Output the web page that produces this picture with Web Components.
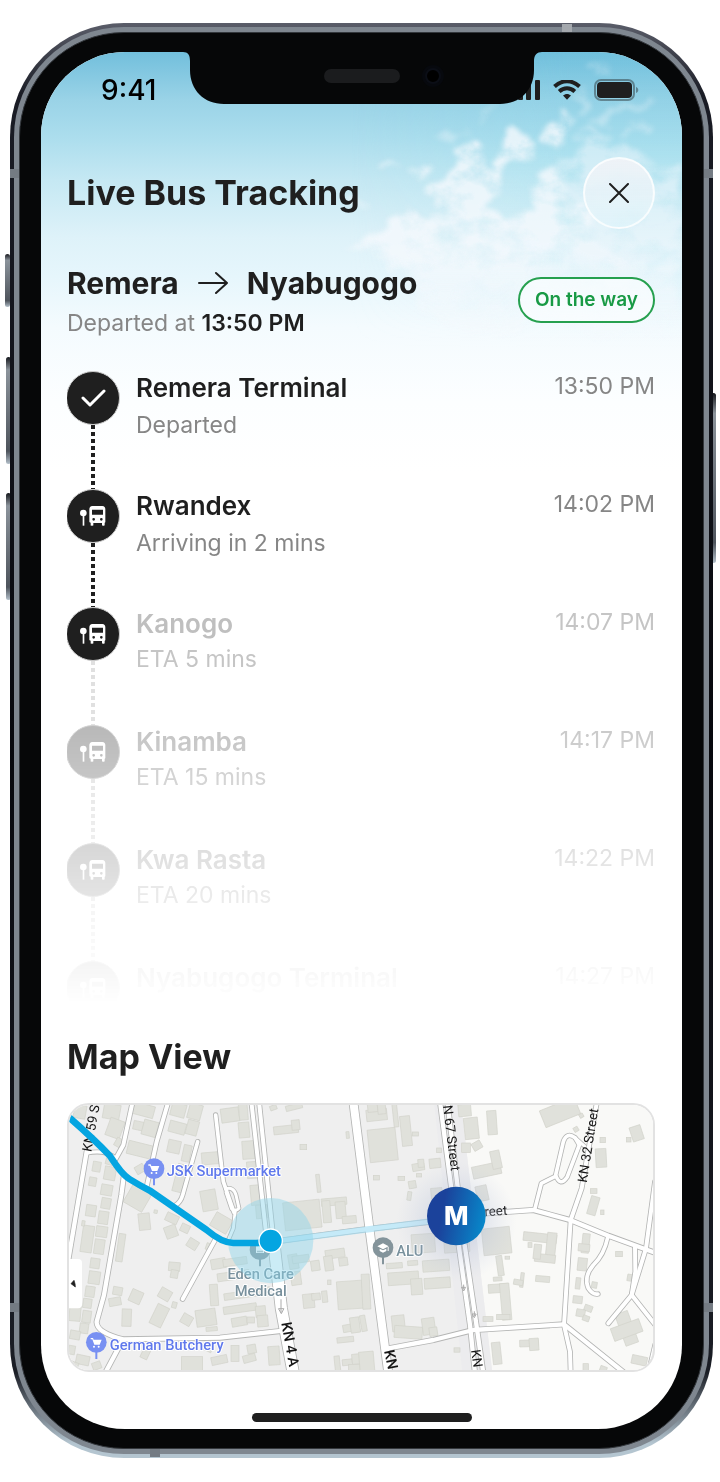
<!DOCTYPE html>
<html lang="en">
<head>
<meta charset="utf-8">
<meta name="viewport" content="width=device-width, initial-scale=1">
<title>Live Bus Tracking</title>
<style>
    body {
        margin: 0;
        padding: 23px 7px 23px 10px;
        background: #fff;
        color: #1f1f1f;
        font-family: Inter, "Liberation Sans", sans-serif;
    }
</style>
</head>
<body>
<phone-frame>
    <status-bar time="9:41"></status-bar>
    <page-header>Live Bus Tracking</page-header>
    <route-summary from="Remera" to="Nyabugogo" departed="13:50 PM">
        <status-pill slot="status">On the way</status-pill>
    </route-summary>
    <stop-timeline>
        <stop-item name="Remera Terminal" time="13:50 PM" icon="check" line="dark">Departed</stop-item>
        <stop-item name="Rwandex" time="14:02 PM" line="dark">Arriving in 2 mins</stop-item>
        <stop-item name="Kanogo" time="14:07 PM" upcoming next>ETA 5 mins</stop-item>
        <stop-item name="Kinamba" time="14:17 PM" upcoming>ETA 15 mins</stop-item>
        <stop-item name="Kwa Rasta" time="14:22 PM" upcoming>ETA 20 mins</stop-item>
        <stop-item name="Nyabugogo Terminal" time="14:27 PM" upcoming></stop-item>
    </stop-timeline>
    <map-section heading="Map View">
        <route-map></route-map>
    </map-section>
</phone-frame>

<script>
class BaseElement extends HTMLElement {
    connectedCallback () {
        if (this.shadowRoot) {
            return;
        }

        const template = document.createElement('template');
        template.innerHTML = this.template();

        this.attachShadow({ mode: 'open' });
        this.shadowRoot.appendChild(document.importNode(template.content, true));
    }

    attr (name) {
        return this.getAttribute(name) || '';
    }
}

class PhoneFrame extends BaseElement {
    template () {
        return `
        <style>
            :host {
                display: block;
                position: relative;
            }

            .edge {
                position: relative;
                padding: 4px;
                border-radius: 114px;
                background: linear-gradient(#5a5d69 0, #1a1c25 5%, #07080d 50%, #1a1d25 94%, #b4c5d0 99%);
            }

            .rail {
                padding: 5px;
                border-radius: 110px;
                background: #7f8790;
            }

            .bezel {
                padding: 19px 21px;
                border: 1px solid #33373c;
                border-radius: 105px;
                background: #060708;
            }

            .screen {
                position: relative;
                overflow: hidden;
                border-radius: 84px;
                background: #fff;
            }

            .content {
                position: relative;
            }

            sky-backdrop {
                position: absolute;
                inset: 0 0 auto 0;
            }

            .notch {
                position: absolute;
                top: 0;
                left: 50%;
                width: 344px;
                height: 52px;
                transform: translateX(-50%);
            }

            .notch svg {
                display: block;
                overflow: visible;
            }

            .key {
                position: absolute;
                width: 5px;
                border-radius: 3px;
                background: linear-gradient(#15171c, #8b939b 12%, #4e545c 88%, #b3bfc9);
            }

            .mute { left: -5px; top: 231px; height: 53px; }
            .volume-up { left: -4px; top: 334px; height: 107px; }
            .volume-down { left: -4px; top: 470px; height: 107px; }
            .power { right: -3px; top: 370px; height: 170px; }

            .seam {
                position: absolute;
                background: #747b83;
            }

            .s1 { left: 0; top: 146px; width: 9px; height: 9px; }
            .s2 { right: 0; top: 146px; width: 9px; height: 9px; }
            .s3 { left: 0; bottom: 146px; width: 9px; height: 9px; }
            .s4 { right: 0; bottom: 146px; width: 9px; height: 9px; }
            .s5 { right: 141px; top: 1px; width: 10px; height: 8px; background: #a4a8ad; }
            .s6 { left: 140px; bottom: 1px; width: 10px; height: 8px; }

            .home {
                width: 220px;
                height: 9px;
                margin: 41px auto 7px;
                border-radius: 5px;
                background: #1f1f1f;
            }
        </style>
        <span class="key mute"></span>
        <span class="key volume-up"></span>
        <span class="key volume-down"></span>
        <span class="key power"></span>
        <div class="edge">
            <div class="rail">
                <div class="bezel">
                    <div class="screen">
                        <sky-backdrop></sky-backdrop>
                        <div class="content">
                            <slot></slot>
                            <div class="home"></div>
                        </div>
                        <div class="notch">
                            <svg width="344" height="52" viewBox="0 0 344 52">
                                <path d="M-7 -1V0C-2 0 0 3 0 9v9c0 20 14 34 34 34h276c20 0 34-14 34-34V9c0-6 3-9 8-9v-1z" fill="#060708"/>
                                <rect x="134" y="17" width="76" height="14" rx="7" fill="#1b1c1e"/>
                                <circle cx="243" cy="24" r="11" fill="#07090e"/>
                                <circle cx="243" cy="24" r="7" fill="#000" stroke="#0b0e16" stroke-width="2"/>
                            </svg>
                        </div>
                    </div>
                </div>
            </div>
            <span class="seam s1"></span>
            <span class="seam s2"></span>
            <span class="seam s3"></span>
            <span class="seam s4"></span>
            <span class="seam s5"></span>
            <span class="seam s6"></span>
        </div>
        `;
    }
}

class SkyBackdrop extends BaseElement {
    template () {
        return `
        <style>
            :host {
                display: block;
                height: 420px;
                background: linear-gradient(#72bfdc 0, #9ad3e7 48px, #abdded 84px, #c5e8f3 128px, #def2f9 185px, #e6f6fc 225px, #f4fbfe 275px, #fcfeff 350px, #fff 420px);
            }

            svg {
                display: block;
                margin-left: auto;
            }
        </style>
        <svg width="370" height="370" viewBox="0 0 1110 1110">
            <defs>
                <filter id="cloud" x="-5%" y="-5%" width="110%" height="110%" color-interpolation-filters="sRGB">
                    <feTurbulence type="fractalNoise" baseFrequency=".011 .014" numOctaves="5" seed="4" result="noise"/>
                    <feDisplacementMap in="SourceGraphic" in2="noise" scale="100" xChannelSelector="R" yChannelSelector="G" result="shape"/>
                    <feGaussianBlur in="shape" stdDeviation="8" result="soft"/>
                    <feColorMatrix in="noise" type="matrix" values="0 0 0 0 1  0 0 0 0 1  0 0 0 0 1  0 0 2 0 -.2" result="holes"/>
                    <feComposite in="soft" in2="holes" operator="in"/>
                </filter>
                <linearGradient id="fade" x2="0" y2="1">
                    <stop offset="0" stop-color="#fff"/>
                    <stop offset=".55" stop-color="#fff"/>
                    <stop offset=".85" stop-color="#000"/>
                </linearGradient>
                <linearGradient id="tint" x2="0" y2="1">
                    <stop offset="0" stop-color="#6ac3df" stop-opacity=".2"/>
                    <stop offset=".3" stop-color="#a4e2ef" stop-opacity=".45"/>
                    <stop offset=".8" stop-color="#e6f7fc" stop-opacity="0"/>
                </linearGradient>
                <linearGradient id="side">
                    <stop offset=".1" stop-color="#000"/>
                    <stop offset=".7" stop-color="#fff"/>
                </linearGradient>
                <mask id="bottom"><rect width="1110" height="1110" fill="url(#fade)"/></mask>
                <mask id="left"><rect width="1110" height="1110" fill="url(#side)"/></mask>
            </defs>
            <rect width="1110" height="1110" fill="url(#tint)" mask="url(#left)"/>
            <g mask="url(#bottom)" fill="#f6f9fd">
                <g filter="url(#cloud)" opacity=".8">
                    <path d="M590 250l50-15 22 20-5 50-60 60-70 40 25-60 20-40z"/>
                    <path d="M700 260l25-50 45-25-8 40-35 60z"/>
                    <path d="M430 280l60-5 35 35 10 60 40 30-60 60-80 40-80-10 20-60-60-20 40-20 60-10z"/>
                    <path d="M670 350l60-5 30 40 20 60 60 10-20 90-80 60-90-20-50-50 20-60 50-30z"/>
                    <path d="M200 530l90-50 60 20 100-20 80-30 90 60 60 100-60 120 60 60-110 60-130-10-110-60-60-130-110-30-80-10z"/>
                    <path d="M730 310l120-50 60 20 80 30 120 30v300l-60-40-110 60-130-60-60-120z" opacity=".6"/>
                    <path d="M640 560l180 0 180 70 100 0v220l-240 10-220-80z" opacity=".7"/>
                    <ellipse cx="240" cy="344" rx="24" ry="9"/>
                    <ellipse cx="325" cy="358" rx="34" ry="12"/>
                    <ellipse cx="130" cy="468" rx="26" ry="10"/>
                    <g opacity=".45">
                        <ellipse cx="865" cy="50" rx="36" ry="14"/>
                        <path d="M790 170l16-80 20 0 2 60-14 24z"/>
                        <ellipse cx="980" cy="168" rx="56" ry="12" transform="rotate(-12 980 168)"/>
                        <ellipse cx="880" cy="190" rx="50" ry="12" transform="rotate(-20 880 190)"/>
                        <ellipse cx="985" cy="232" rx="60" ry="14" transform="rotate(-10 985 232)"/>
                        <ellipse cx="840" cy="246" rx="60" ry="16"/>
                        <ellipse cx="520" cy="180" rx="40" ry="10" transform="rotate(-40 520 180)"/>
                        <ellipse cx="430" cy="238" rx="44" ry="9" transform="rotate(-15 430 238)"/>
                    </g>
                </g>
            </g>
        </svg>
        `;
    }
}

class StatusBar extends BaseElement {
    template () {
        return `
        <style>
            :host {
                display: flex;
                align-items: center;
                justify-content: space-between;
                height: 76px;
                padding: 0 43px 0 60px;
                color: #000;
                font-size: 28px;
                font-weight: 500;
            }

            .icons {
                display: flex;
                align-items: center;
                gap: 13px;
            }

            svg {
                display: block;
            }
        </style>
        <span>${this.attr('time')}</span>
        <div class="icons">
            <svg width="30" height="20" viewBox="0 0 30 20" fill="#1f1f1f">
                <rect x="0" y="13" width="5" height="7" rx="1"/>
                <rect x="8" y="9" width="5" height="11" rx="1"/>
                <rect x="16" y="4" width="5" height="16" rx="1"/>
                <rect x="25" y="0" width="5" height="20" rx="1"/>
            </svg>
            <svg width="28" height="20" viewBox="0 0 28 20" fill="none" stroke="#1f1f1f">
                <path d="M1.500 6.500C9-.5 19-.5 26.500 6.500" stroke-width="4"/>
                <path d="M6.200 11.500c4.600-4.200 11-4.200 15.600 0" stroke-width="4"/>
                <path d="M10 15.600c2.400-2.200 5.600-2.200 8 0l-4 4.200z" fill="#1f1f1f" stroke="none"/>
            </svg>
            <svg width="45" height="22" viewBox="0 0 45 22">
                <rect x="1" y="1" width="39" height="20" rx="6" fill="none" stroke="#1f1f1f" stroke-opacity=".42" stroke-width="2"/>
                <rect x="3" y="3" width="35" height="16" rx="4" fill="#1f1f1f"/>
                <path d="M42 8c3 1 3 5 0 6z" fill="#1f1f1f" fill-opacity=".42"/>
            </svg>
        </div>
        `;
    }
}

class PageHeader extends BaseElement {
    template () {
        return `
        <style>
            :host {
                display: flex;
                align-items: center;
                justify-content: space-between;
                padding: 29px 27px 0 26px;
            }

            h1 {
                margin: 0;
                font-size: 34px;
                line-height: 40px;
                font-weight: 700;
            }

            button {
                display: grid;
                place-items: center;
                width: 72px;
                height: 72px;
                padding: 0;
                border: 2px solid rgba(255, 255, 255, .75);
                border-radius: 50%;
                background: linear-gradient(rgba(241, 243, 247, .9), rgba(223, 244, 250, .75));
                color: #1f1f1f;
                cursor: pointer;
            }
        </style>
        <h1><slot></slot></h1>
        <button type="button" aria-label="Close">
            <svg width="20" height="20" viewBox="0 0 20 20" fill="none" stroke="currentColor" stroke-width="2" stroke-linecap="round">
                <path d="M1 1l18 18M19 1L1 19"/>
            </svg>
        </button>
        `;
    }
}

class RouteSummary extends BaseElement {
    template () {
        return `
        <style>
            :host {
                display: flex;
                align-items: center;
                justify-content: space-between;
                padding: 34px 27px 0 26px;
            }

            h2 {
                display: flex;
                align-items: center;
                gap: 19px;
                margin: 0;
                font-size: 30px;
                line-height: 40px;
                font-weight: 700;
            }

            p {
                margin: 0;
                color: #868686;
                font-size: 23px;
                line-height: 40px;
            }

            b {
                color: #1f1f1f;
                font-weight: 600;
            }
        </style>
        <div>
            <h2>
                <span>${this.attr('from')}</span>
                <svg width="30" height="24" viewBox="0 0 30 24" fill="none" stroke="currentColor" stroke-width="2" stroke-linecap="round" stroke-linejoin="round" aria-hidden="true">
                    <path d="M1 12h28M18 2l11 10-11 10"/>
                </svg>
                <span>${this.attr('to')}</span>
            </h2>
            <p>Departed at <b>${this.attr('departed')}</b></p>
        </div>
        <slot name="status"></slot>
        `;
    }
}

class StatusPill extends BaseElement {
    template () {
        return `
        <style>
            :host {
                display: block;
                margin-bottom: 6px;
                padding: 0 15px;
                border: 2px solid #26a04f;
                border-radius: 24px;
                background: rgba(255, 255, 255, .5);
                color: #189a45;
                font-size: 19px;
                line-height: 42px;
                font-weight: 600;
                white-space: nowrap;
            }
        </style>
        <slot></slot>
        `;
    }
}

class StopTimeline extends BaseElement {
    template () {
        return `
        <style>
            :host {
                display: block;
                height: 632px;
                margin: 28px 27px 0 26px;
                overflow: hidden;
                -webkit-mask-image: linear-gradient(#000 330px, transparent);
                mask-image: linear-gradient(#000 330px, transparent);
            }
        </style>
        <slot></slot>
        `;
    }
}

const stopIcons = {
    check: `<svg width="25" height="18" viewBox="0 0 25 18" fill="none" stroke="#fff" stroke-width="3" stroke-linecap="round" stroke-linejoin="round">
                <path d="M2 9l7 7L23 2"/>
            </svg>`,
    bus: `<svg width="26" height="20" viewBox="0 0 78 60" fill="#fff">
                <circle cx="10" cy="21" r="10"/>
                <path d="M8 20h5v39H8z"/>
                <path fill-rule="evenodd" d="M37 0h30c6 0 9 4 9 10v38c0 1-1 2-2 2v8c0 2-8 2-8 0v-7H40v7c0 2-8 2-8 0v-8c-3 0-4-1-4-4V10c0-6 3-10 9-10zM36 11v15h33V11zM41 36a4 4 0 100 8 4 4 0 000-8zM64 36a4 4 0 100 8 4 4 0 000-8z"/>
            </svg>`,
};

class StopItem extends BaseElement {
    template () {
        return `
        <style>
            :host {
                display: grid;
                grid-template-columns: 52px 1fr auto;
                column-gap: 17px;
                height: 118px;
                --ink: #1f1f1f;
                --muted: #868686;
                --dot: #1f1f1f;
                --line: #e0e0e0;
            }

            :host([upcoming]) {
                --ink: #bfbfbf;
                --muted: #c5c5c5;
                --dot: #b2b2b2;
            }

            :host([next]) {
                --dot: #1f1f1f;
            }

            :host([line="dark"]) {
                --line: #1f1f1f;
            }

            .track {
                display: flex;
                flex-direction: column;
                align-items: center;
            }

            .dot {
                display: grid;
                place-items: center;
                box-sizing: border-box;
                width: 54px;
                height: 54px;
                border: 1px solid #ccc;
                border-radius: 50%;
                background: var(--dot);
            }

            .line {
                flex: 1;
                width: 4px;
                background: repeating-linear-gradient(var(--line) 0 4px, transparent 4px 7px);
            }

            .name {
                margin: 0;
                color: var(--ink);
                font-size: 26px;
                line-height: 34px;
                font-weight: 600;
                white-space: nowrap;
            }

            .note {
                margin: 5px 0 0;
                color: var(--muted);
                font-size: 23px;
                line-height: 30px;
            }

            :host([upcoming]) .note {
                margin-top: 3px;
            }

            time {
                color: var(--muted);
                font-size: 23px;
                line-height: 30px;
            }
        </style>
        <div class="track">
            <span class="dot">${stopIcons[this.attr('icon') || 'bus']}</span>
            <span class="line"></span>
        </div>
        <div>
            <h3 class="name">${this.attr('name')}</h3>
            <p class="note"><slot></slot></p>
        </div>
        <time>${this.attr('time')}</time>
        `;
    }
}

class MapSection extends BaseElement {
    template () {
        return `
        <style>
            :host {
                display: block;
                padding: 34px 27px 0 26px;
            }

            h2 {
                margin: 0 0 26px;
                font-size: 34px;
                line-height: 40px;
                font-weight: 700;
            }
        </style>
        <h2>${this.attr('heading')}</h2>
        <slot></slot>
        `;
    }
}

// centre x, centre y, width, height, angle
const buildings = [
    [60, 50, 36, 40, 10], [155, 50, 50, 45, 10], [165, 100, 45, 55, 20], [180, 145, 30, 26, 30],
    [250, 45, 66, 36, 15], [235, 92, 30, 26, 12], [270, 100, 44, 46, 15], [243, 165, 82, 40, 14],
    [355, 45, 44, 40, 15], [405, 50, 40, 46, 15], [352, 98, 50, 34, 15], [397, 98, 34, 44, 15],
    [342, 155, 38, 38, 12], [380, 175, 24, 50, 12], [362, 250, 34, 84, 14], [450, 190, 50, 36, -5],
    [510, 60, 54, 42, -8], [550, 50, 26, 50, -5], [552, 105, 32, 46, -5], [565, 165, 36, 54, -4],
    [578, 225, 34, 50, -4], [590, 300, 36, 60, -5], [605, 350, 34, 40, -5],
    [148, 200, 22, 18, 15], [110, 215, 24, 30, 10], [150, 235, 34, 40, 10], [98, 260, 22, 26, 10],
    [140, 285, 34, 32, 10], [138, 325, 28, 32, 10], [93, 347, 30, 34, 8], [130, 368, 30, 38, 8],
    [125, 410, 34, 32, 8], [82, 432, 34, 80, 8], [118, 455, 30, 44, 8], [70, 385, 9, 16, 8],
    [105, 505, 28, 30, 8], [103, 548, 34, 38, 8], [90, 590, 28, 32, 8], [82, 625, 26, 28, 8],
    [45, 655, 34, 46, 5], [80, 665, 26, 36, 8], [72, 700, 26, 30, 8], [45, 720, 30, 26, 10],
    [35, 765, 20, 26, 10], [68, 795, 40, 28, 12], [110, 812, 26, 22, -20], [42, 812, 24, 22, 20],
    [232, 310, 64, 60, 30], [240, 222, 28, 24, -30], [287, 350, 10, 10, 10], [253, 380, 34, 50, -6],
    [182, 458, 20, 84, 8], [336, 370, 38, 26, 25], [333, 410, 36, 36, -20], [375, 400, 26, 24, 25],
    [398, 447, 32, 28, 32], [446, 455, 16, 20, 20], [447, 316, 46, 62, -10], [484, 384, 56, 46, 30],
    [343, 515, 34, 26, 5], [343, 537, 22, 24, 10], [173, 588, 28, 24, 10], [165, 620, 36, 24, -10],
    [228, 605, 36, 38, 24], [200, 668, 28, 52, 2], [315, 598, 36, 32, 30], [343, 630, 14, 18, 15],
    [298, 662, 38, 64, 26], [380, 674, 32, 30, 30], [438, 668, 60, 50, -8], [455, 702, 34, 12, -5],
    [462, 600, 24, 64, -4], [475, 506, 44, 30, -10], [525, 500, 72, 22, -8], [520, 542, 96, 24, -8],
    [540, 600, 96, 20, -8], [540, 641, 100, 22, -8], [538, 680, 46, 26, -10], [572, 675, 22, 18, 0],
    [602, 650, 30, 34, -5], [608, 678, 32, 34, -5], [600, 590, 60, 22, -8],
    [396, 806, 64, 42, 0], [478, 795, 48, 24, -12], [525, 775, 24, 48, 0], [575, 762, 26, 26, -10],
    [568, 790, 38, 22, -15], [642, 782, 34, 56, -4], [258, 772, 22, 40, 25], [445, 760, 24, 18, 25],
    [678, 104, 74, 24, -6], [707, 90, 24, 30, -6], [702, 36, 50, 16, -14], [640, 38, 20, 14, -20], [730, 156, 20, 16, 0],
    [775, 265, 11, 54, -6], [727, 360, 110, 84, -6], [822, 320, 76, 22, -5], [800, 350, 24, 66, -5],
    [842, 345, 30, 50, -5], [868, 374, 42, 22, -5], [863, 120, 9, 20, -5],
    [700, 500, 28, 44, -10], [722, 492, 50, 22, -8], [766, 512, 26, 30, -8], [825, 476, 58, 26, -8],
    [806, 505, 26, 44, -8], [850, 500, 26, 24, -8], [708, 550, 30, 40, -8],
    [746, 618, 34, 42, -6], [768, 605, 26, 20, -6], [794, 605, 16, 34, -6], [808, 562, 10, 14, 0],
    [870, 600, 76, 84, -4], [862, 700, 26, 22, -10], [885, 690, 28, 46, -8], [856, 734, 50, 16, -6],
    [832, 806, 16, 46, -6], [862, 802, 30, 18, -6], [890, 792, 28, 30, -6], [886, 818, 40, 20, 0],
    [918, 590, 24, 105, -3], [910, 685, 16, 48, -10], [920, 800, 44, 60, -5],
    [950, 60, 62, 34, -6], [938, 38, 30, 26, -6], [965, 40, 24, 34, -6], [968, 150, 84, 98, -6],
    [1006, 60, 14, 72, -6], [1038, 108, 30, 90, -6], [1066, 117, 18, 12, 0], [1075, 216, 36, 22, -10],
    [1083, 205, 18, 24, -5], [1125, 205, 34, 28, -6], [949, 248, 18, 14, 0], [1024, 250, 20, 12, 0],
    [1057, 269, 22, 22, -10], [1077, 241, 16, 10, 0], [1048, 303, 12, 26, 8], [1137, 166, 14, 14, 0],
    [1130, 295, 34, 32, -5], [1190, 445, 76, 54, -4], [1003, 512, 48, 16, -4], [1058, 504, 30, 14, -4],
    [1090, 445, 70, 56, -4], [1128, 512, 80, 34, -4], [1132, 564, 78, 32, -4], [1030, 550, 92, 38, -4], [1070, 575, 34, 48, -4],
    [1015, 685, 38, 48, -6], [1045, 712, 84, 36, 4], [1106, 694, 38, 50, -8], [1120, 710, 24, 26, -8], [1191, 765, 18, 13, 0],
    [1214, 46, 38, 36, -5], [1234, 100, 42, 64, -6], [1218, 158, 26, 28, 0], [1251, 152, 28, 24, -30],
    [1296, 83, 28, 72, -4], [1280, 226, 86, 36, -12], [1308, 194, 28, 54, -12], [1266, 295, 34, 46, -12],
    [1500, 52, 112, 54, -22], [1564, 62, 12, 12, -30], [1548, 103, 14, 14, -30], [1730, 115, 34, 44, -18],
    [1706, 134, 14, 14, 0], [1628, 135, 16, 16, 0], [1623, 189, 32, 56, -3], [1601, 288, 20, 14, 0],
    [1600, 332, 26, 56, 16], [1627, 352, 10, 14, 0], [1310, 438, 84, 80, -6], [1320, 512, 18, 60, -8],
    [1342, 488, 14, 9, 0], [1313, 552, 26, 12, -4], [1440, 428, 100, 26, 6], [1473, 455, 28, 84, 6],
    [1455, 490, 62, 24, 6], [1432, 470, 22, 44, 6], [1410, 450, 12, 14, 0], [1386, 555, 10, 44, 6],
    [1375, 562, 28, 16, 10], [1448, 552, 42, 18, 5], [1315, 580, 60, 26, -4], [1337, 620, 28, 110, -5],
    [1284, 672, 30, 14, 0], [1330, 666, 40, 16, 0], [1310, 775, 26, 66, -6],
    [1407, 745, 56, 20, -2], [1422, 748, 28, 36, -4], [1577, 445, 22, 58, 6],
    [1572, 458, 34, 22, 6], [1567, 508, 28, 38, 6], [1554, 565, 14, 34, 6], [1603, 570, 16, 18, 10],
    [1553, 614, 28, 22, 6], [1585, 640, 24, 18, 20], [1562, 654, 26, 22, 10], [1578, 670, 20, 16, 20],
    [1677, 477, 20, 16, 0], [1709, 548, 14, 20, 10], [1700, 700, 40, 100, -20], [1700, 705, 90, 40, -20],
    [1738, 796, 46, 26, 12], [1577, 818, 16, 24, 0], [1630, 822, 20, 16, 20],
];

// path, width
const roads = [
    ['M80 174Q130 164 160 184', 10],
    ['M80 170L24 500', 13],
    ['M218 20L190 150 165 195', 12],
    ['M192 240L184 300 132 600 110 680Q108 712 190 733L480 728 670 707', 13],
    ['M188 735L135 835', 13],
    ['M325 20L290 140 260 275', 12],
    ['M413 140L368 300Q362 322 345 332', 11],
    ['M467 60L490 260 522 352', 11],
    ['M497 282Q520 274 528 300L537 340Q526 352 515 342L498 292', 9],
    ['M526 345L520 400 505 435', 9],
    ['M465 435L368 612', 12],
    ['M574 20L620 430', 12],
    ['M597 20L640 430', 12],
    ['M640 430L664 640 700 835', 34],
    ['M640 440L900 405 1110 380 1280 355 1420 345 1530 375 1645 422 1790 475', 13],
    ['M880 20L932 430 985 835', 24],
    ['M985 760L1120 735 1240 705 1512 688', 13],
    ['M1512 688L1695 835', 13],
    ['M1140 20L1196 450 1230 690 1245 835', 13],
    ['M1162 20L1214 450 1245 660 1270 835', 13],
    ['M1611 20L1600 80 1565 280 1532 375 1512 690 1530 770 1532 835', 12],
    ['M1425 340L1444 265 1486 244', 11],
    ['M1487 240L1510 140Q1520 110 1545 128L1558 150 1522 245Q1500 278 1487 240', 11],
    ['M1545 128L1575 155', 9],
    ['M1643 428Q1632 480 1600 510 1570 545 1585 580 1598 600 1614 597', 11],
    ['M1785 260L1758 460 1715 600 1645 685', 12],
    ['M1725 455L1726 530 1715 600 1790 695', 12],
    ['M1785 750L1765 835', 11],
];

const cart = '<path d="M-17-13h7l2 5h24l-6 15H-6L-12-9h-5zM-7 10a3 3 0 100 6 3 3 0 000-6zM7 10a3 3 0 100 6 3 3 0 000-6z" fill="#fff"/>';
const cap = '<path d="M-17-4L0-13 17-4 0 5zM-10 3v7l10 5 10-5V3L0 8zM14-2h3v12h-3z" fill="#fff"/>';
const clinic = '<path d="M-12-10h24v20h-24zM-6-14H6v4H-6z" fill="#fff"/><path d="M-8 3h4v5h-4zM-2 3h4v5h-4zM4 3h4v5H4z" fill="#84949b"/>';

class RouteMap extends BaseElement {
    drawBuilding ([x, y, w, h, angle]) {
        return `<rect x="${x - w / 2}" y="${y - h / 2}" width="${w}" height="${h}" transform="rotate(${angle} ${x} ${y})"/>`;
    }

    drawPin (x, y, colour, icon) {
        return `
        <g transform="translate(${x} ${y})">
            <path d="M0 28v22" stroke="${colour}" stroke-width="6"/>
            <circle r="31" fill="${colour}"/>
            ${icon}
        </g>`;
    }

    template () {
        return `
        <style>
            :host {
                display: block;
                overflow: hidden;
                box-sizing: border-box;
                border: 2px solid #e2e2e2;
                border-radius: 22px;
            }

            svg {
                display: block;
                width: 100%;
                height: auto;
            }

            text {
                font-family: Roboto, "Liberation Sans", sans-serif;
                font-size: 44px;
                paint-order: stroke;
                stroke: #fff;
                stroke-width: 6px;
                stroke-linejoin: round;
            }

            .place { font-weight: 500; }
            .shop { fill: #6079ec; }
            .site { fill: #78909c; }
            .street { font-size: 40px; fill: #151515; stroke: none; }
            .major { font-size: 44px; font-weight: 500; }
            .bus { font-family: Inter, sans-serif; font-size: 78px; font-weight: 800; fill: #fff; stroke: none; }
        </style>
        <svg viewBox="27 30 1752 795" role="img" aria-label="Map of the bus route">
            <defs>
                <linearGradient id="marker" x1="0" y1=".4" x2="1" y2=".6">
                    <stop offset=".25" stop-color="#1b429b"/>
                    <stop offset="1" stop-color="#0789cb"/>
                </linearGradient>
                <radialGradient id="glow">
                    <stop offset=".3" stop-color="#a9b6d4" stop-opacity=".4"/>
                    <stop offset="1" stop-color="#c3cce0" stop-opacity="0"/>
                </radialGradient>
            </defs>
            <rect width="1800" height="860" fill="#f9f9f7"/>
            <path d="M0 0h1200l100 860H0z" fill="#efefef"/>
            <path d="M1120 0h80l100 860h-90z" fill="#ececee"/>
            <g fill="#e0e1db" stroke="#d2d3cb" stroke-width="2">
                ${buildings.map(this.drawBuilding).join('')}
            </g>
            <g fill="none" stroke-linecap="round" stroke-linejoin="round">
                <g stroke="#b4b5b4">
                    ${roads.map(([d, width]) => `<path d="${d}" stroke-width="${width + 5}"/>`).join('')}
                </g>
                <g stroke="#fff">
                    ${roads.map(([d, width]) => `<path d="${d}" stroke-width="${width}"/>`).join('')}
                </g>
                <path d="M663 614v38m-7-10l8 14 7-14zM1211 570v12m-6-4l6 10 5-10zM1243 650v12m-6-4l6 10 5-10z" stroke="#aaa" stroke-width="3"/>
            </g>

            ${this.drawPin(282, 221, '#7890f2', cart)}
            ${this.drawPin(109, 742, '#7890f2', cart)}
            ${this.drawPin(969, 458, '#84949b', cap)}
            ${this.drawPin(600, 464, '#84949b', clinic)}

            <text class="place shop" x="320" y="244">JSK Supermarket</text>
            <text class="place shop" x="149" y="766">German Butchery</text>
            <text class="place site" x="602" y="551" text-anchor="middle">Eden Care</text>
            <text class="place site" x="602" y="602" text-anchor="middle">Medical</text>
            <text class="place site" x="1009" y="483">ALU</text>

            <text class="street" transform="translate(94 172) rotate(-80)">KN 59 S</text>
            <text class="street major" transform="translate(664 684) rotate(80)">KN 4 A</text>
            <text class="street major" transform="translate(972 768) rotate(78)">KN</text>
            <text class="street" transform="translate(1149 32) rotate(83)">N 67 Street</text>
            <text class="street" transform="translate(1233 766) rotate(82)">KN</text>
            <text class="street" transform="translate(1580 264) rotate(-81)">KN 32 Street</text>
            <text class="street" transform="translate(1274 364) rotate(-4)">reet</text>

            <path d="M640 440L900 406 1110 379" fill="none" stroke="#9edcf3" stroke-opacity=".6" stroke-width="19"/>
            <circle cx="632" cy="437" r="128" fill="#8cd4ec" fill-opacity=".45"/>
            <path d="M10 52Q100 130 150 183 185 238 208 252 240 272 270 287L440 405Q485 443 520 444H632" fill="none" stroke="#04a5e1" stroke-width="20"/>
            <circle cx="632" cy="437" r="35" fill="#04a5e1" stroke="#fff" stroke-width="4"/>

            <circle cx="1189" cy="380" r="180" fill="url(#glow)"/>
            <circle cx="1189" cy="363" r="88" fill="url(#marker)"/>
            <text class="bus" x="1189" y="391" text-anchor="middle">M</text>

            <rect x="10" y="492" width="56" height="148" rx="12" fill="#fff"/>
            <path d="M33 566l9-10q4 10 4 20z" fill="#1f1f1f" stroke="#1f1f1f" stroke-width="2"/>
        </svg>
        `;
    }
}

customElements.define('sky-backdrop', SkyBackdrop);
customElements.define('phone-frame', PhoneFrame);
customElements.define('status-bar', StatusBar);
customElements.define('page-header', PageHeader);
customElements.define('route-summary', RouteSummary);
customElements.define('status-pill', StatusPill);
customElements.define('stop-timeline', StopTimeline);
customElements.define('stop-item', StopItem);
customElements.define('map-section', MapSection);
customElements.define('route-map', RouteMap);
</script>
</body>
</html>
